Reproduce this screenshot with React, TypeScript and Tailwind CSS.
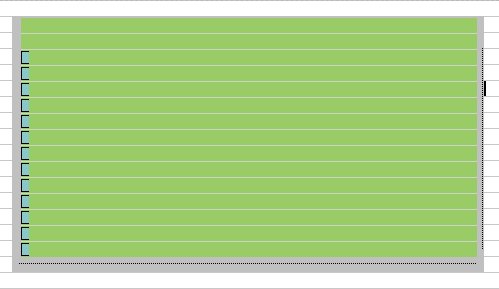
const rows = Array.from({ length: 15 }, (_, i) => i)

function Row({ index }: { index: number }) {
  const withBox = index >= 2
  return (
    <div
      className={
        index === 0
          ? "h-[15px] flex"
          : "h-[16px] flex border-t border-[#cdd6c2]"
      }
    >
      {withBox && (
        <div className="mt-[1px] h-[13px] w-[8px] border-l border-t border-b border-black bg-[#88c8c8]" />
      )}
    </div>
  )
}

export default function App() {
  return (
    <div className="w-[499px] h-[289px] overflow-hidden border-t border-dashed border-[#b8b8b8] bg-[image:repeating-linear-gradient(to_bottom,transparent_0px,transparent_15px,#c8c8c8_15px,#c8c8c8_16px)]">
      <div className="flex mt-[15px]">
        <div className="ml-[12px] w-[472px] h-[256px] bg-[#c0c0c0] pt-[2px] pl-[9px] flex flex-col">
          <div className="flex">
            <div className="w-[456px] bg-[#99cc66] flex flex-col">
              {rows.map((i) => (
                <Row key={i} index={i} />
              ))}
            </div>
            <div className="ml-[5px] mt-[30px] h-[201px] border-l border-dotted border-black" />
          </div>
          <div className="-ml-[2px] mt-[6px] w-[457px] border-t border-dotted border-black" />
        </div>
        <div className="mt-[65px] w-[2px] h-[15px] bg-black" />
      </div>
    </div>
  )
}
